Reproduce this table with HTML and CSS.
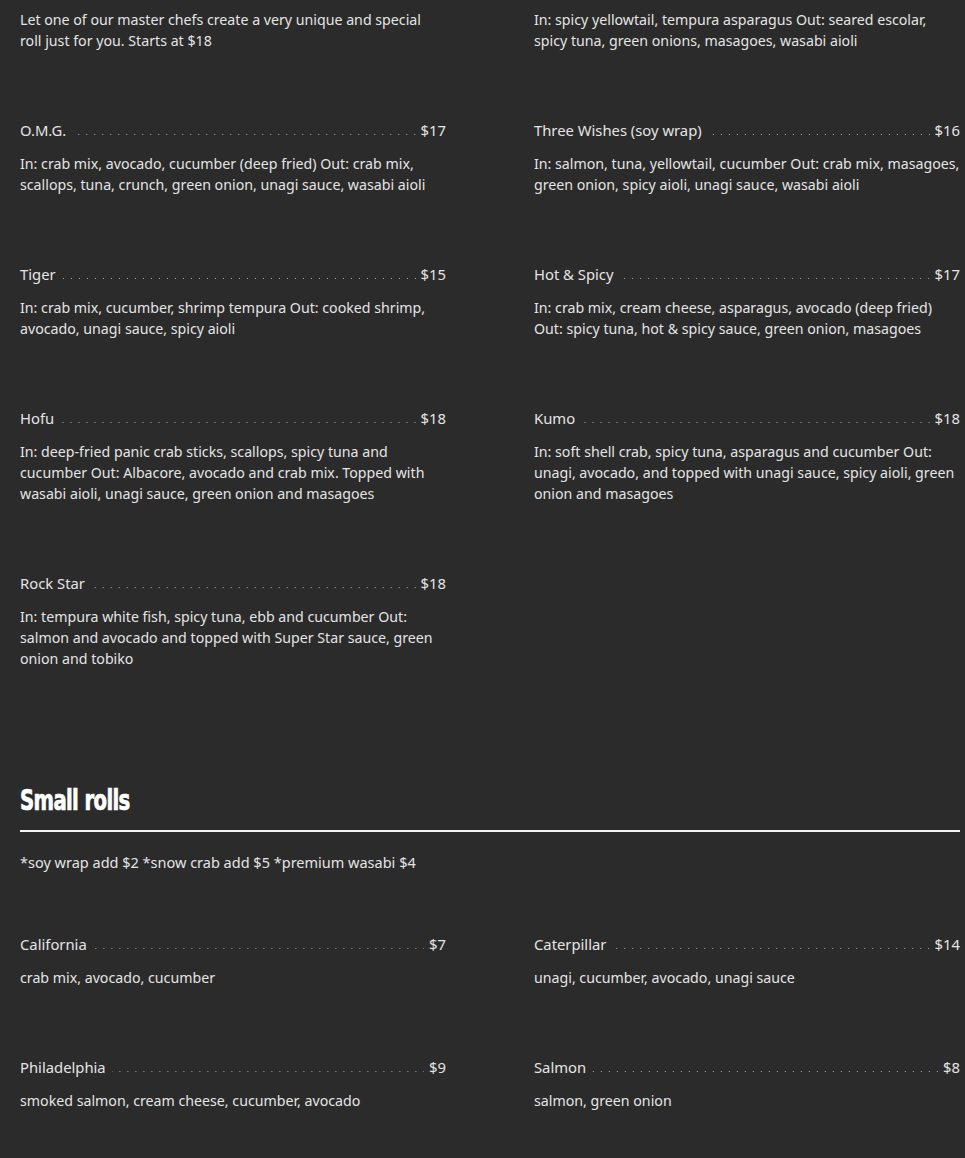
FILE: index.html
```html
<!DOCTYPE html>
<html lang="en">
<head>
<meta charset="utf-8">
<title>Menu</title>
<link rel="stylesheet" href="styles.css">
</head>
<body>
<main class="menu">
  <section class="grid">
    <article class="item">
      <p class="desc">Let one of our master chefs create a very unique and special roll just for you. Starts at $18</p>
    </article>
    <article class="item">
      <p class="desc">In: spicy yellowtail, tempura asparagus Out: seared escolar, spicy tuna, green onions, masagoes, wasabi aioli</p>
    </article>
    <article class="item">
      <div class="head"><span class="name">O.M.G.</span><span class="leader"></span><span class="price">$17</span></div>
      <p class="desc">In: crab mix, avocado, cucumber (deep fried) Out: crab mix, scallops, tuna, crunch, green onion, unagi sauce, wasabi aioli</p>
    </article>
    <article class="item">
      <div class="head"><span class="name">Three Wishes (soy wrap)</span><span class="leader"></span><span class="price">$16</span></div>
      <p class="desc">In: salmon, tuna, yellowtail, cucumber Out: crab mix, masagoes, green onion, spicy aioli, unagi sauce, wasabi aioli</p>
    </article>
    <article class="item">
      <div class="head"><span class="name">Tiger</span><span class="leader"></span><span class="price">$15</span></div>
      <p class="desc">In: crab mix, cucumber, shrimp tempura Out: cooked shrimp, avocado, unagi sauce, spicy aioli</p>
    </article>
    <article class="item">
      <div class="head"><span class="name">Hot &amp; Spicy</span><span class="leader"></span><span class="price">$17</span></div>
      <p class="desc">In: crab mix, cream cheese, asparagus, avocado (deep fried) Out: spicy tuna, hot &amp; spicy sauce, green onion, masagoes</p>
    </article>
    <article class="item">
      <div class="head"><span class="name">Hofu</span><span class="leader"></span><span class="price">$18</span></div>
      <p class="desc">In: deep-fried panic crab sticks, scallops, spicy tuna and cucumber Out: Albacore, avocado and crab mix. Topped with wasabi aioli, unagi sauce, green onion and masagoes</p>
    </article>
    <article class="item">
      <div class="head"><span class="name">Kumo</span><span class="leader"></span><span class="price">$18</span></div>
      <p class="desc">In: soft shell crab, spicy tuna, asparagus and cucumber Out: unagi, avocado, and topped with unagi sauce, spicy aioli, green onion and masagoes</p>
    </article>
    <article class="item">
      <div class="head"><span class="name">Rock Star</span><span class="leader"></span><span class="price">$18</span></div>
      <p class="desc">In: tempura white fish, spicy tuna, ebb and cucumber Out: salmon and avocado and topped with Super Star sauce, green onion and tobiko</p>
    </article>
  </section>

  <section class="category">
    <h2 class="category-title"><span class="category-text">Small rolls</span></h2>
    <p class="note">*soy wrap add $2 *snow crab add $5 *premium wasabi $4</p>
    <div class="grid">
      <article class="item">
        <div class="head"><span class="name">California</span><span class="leader"></span><span class="price">$7</span></div>
        <p class="desc">crab mix, avocado, cucumber</p>
      </article>
      <article class="item">
        <div class="head"><span class="name">Caterpillar</span><span class="leader"></span><span class="price">$14</span></div>
        <p class="desc">unagi, cucumber, avocado, unagi sauce</p>
      </article>
      <article class="item">
        <div class="head"><span class="name">Philadelphia</span><span class="leader"></span><span class="price">$9</span></div>
        <p class="desc">smoked salmon, cream cheese, cucumber, avocado</p>
      </article>
      <article class="item">
        <div class="head"><span class="name">Salmon</span><span class="leader"></span><span class="price">$8</span></div>
        <p class="desc">salmon, green onion</p>
      </article>
    </div>
  </section>
</main>
</body>
</html>
```

FILE: styles.css
```css
html, body {
  margin: 0;
  padding: 0;
  background: #2b2b2b;
}

body {
  font-family: "Noto Sans", "Open Sans", "Liberation Sans", sans-serif;
  font-size: 14.2px;
  line-height: 21px;
  color: #e4e4e4;
  height: 1158px;
  overflow: hidden;
}

.menu {
  padding: 8.5px 5px 0 20px;
}

.grid {
  display: grid;
  grid-template-columns: 1fr 1fr;
  column-gap: 88px;
  align-items: start;
}

.item {
  margin: 0 0 69px;
}

.grid > .item:nth-child(odd) .desc {
  padding-right: 6px;
}

.head {
  display: flex;
  align-items: flex-end;
  height: 21px;
  margin-bottom: 12px;
  font-size: 14.8px;
}

.name,
.price {
  white-space: nowrap;
}

.leader {
  flex: 1;
  align-self: stretch;
  margin: 0 5px 0 6px;
  background-image: linear-gradient(to right, #a8a8a8 1px, transparent 1px);
  background-size: 8px 1px;
  background-repeat: repeat-x;
  background-position: right 1px bottom 6px;
}

.desc {
  margin: 0;
}

.category-title {
  margin: 46px 0 0;
  padding-bottom: 12px;
  border-bottom: 2px solid #f2f2f2;
  font-family: "DejaVu Sans Condensed", "DejaVu Sans", sans-serif;
  font-weight: 700;
  font-size: 28px;
  line-height: 34px;
  letter-spacing: -0.8px;
  color: #ffffff;
}

.category-text {
  display: inline-block;
  transform: scaleX(0.78);
  transform-origin: left center;
  -webkit-text-stroke: 0.7px #ffffff;
}

.note {
  margin: 20px 0 61px;
  font-size: 14.5px;
}
```
